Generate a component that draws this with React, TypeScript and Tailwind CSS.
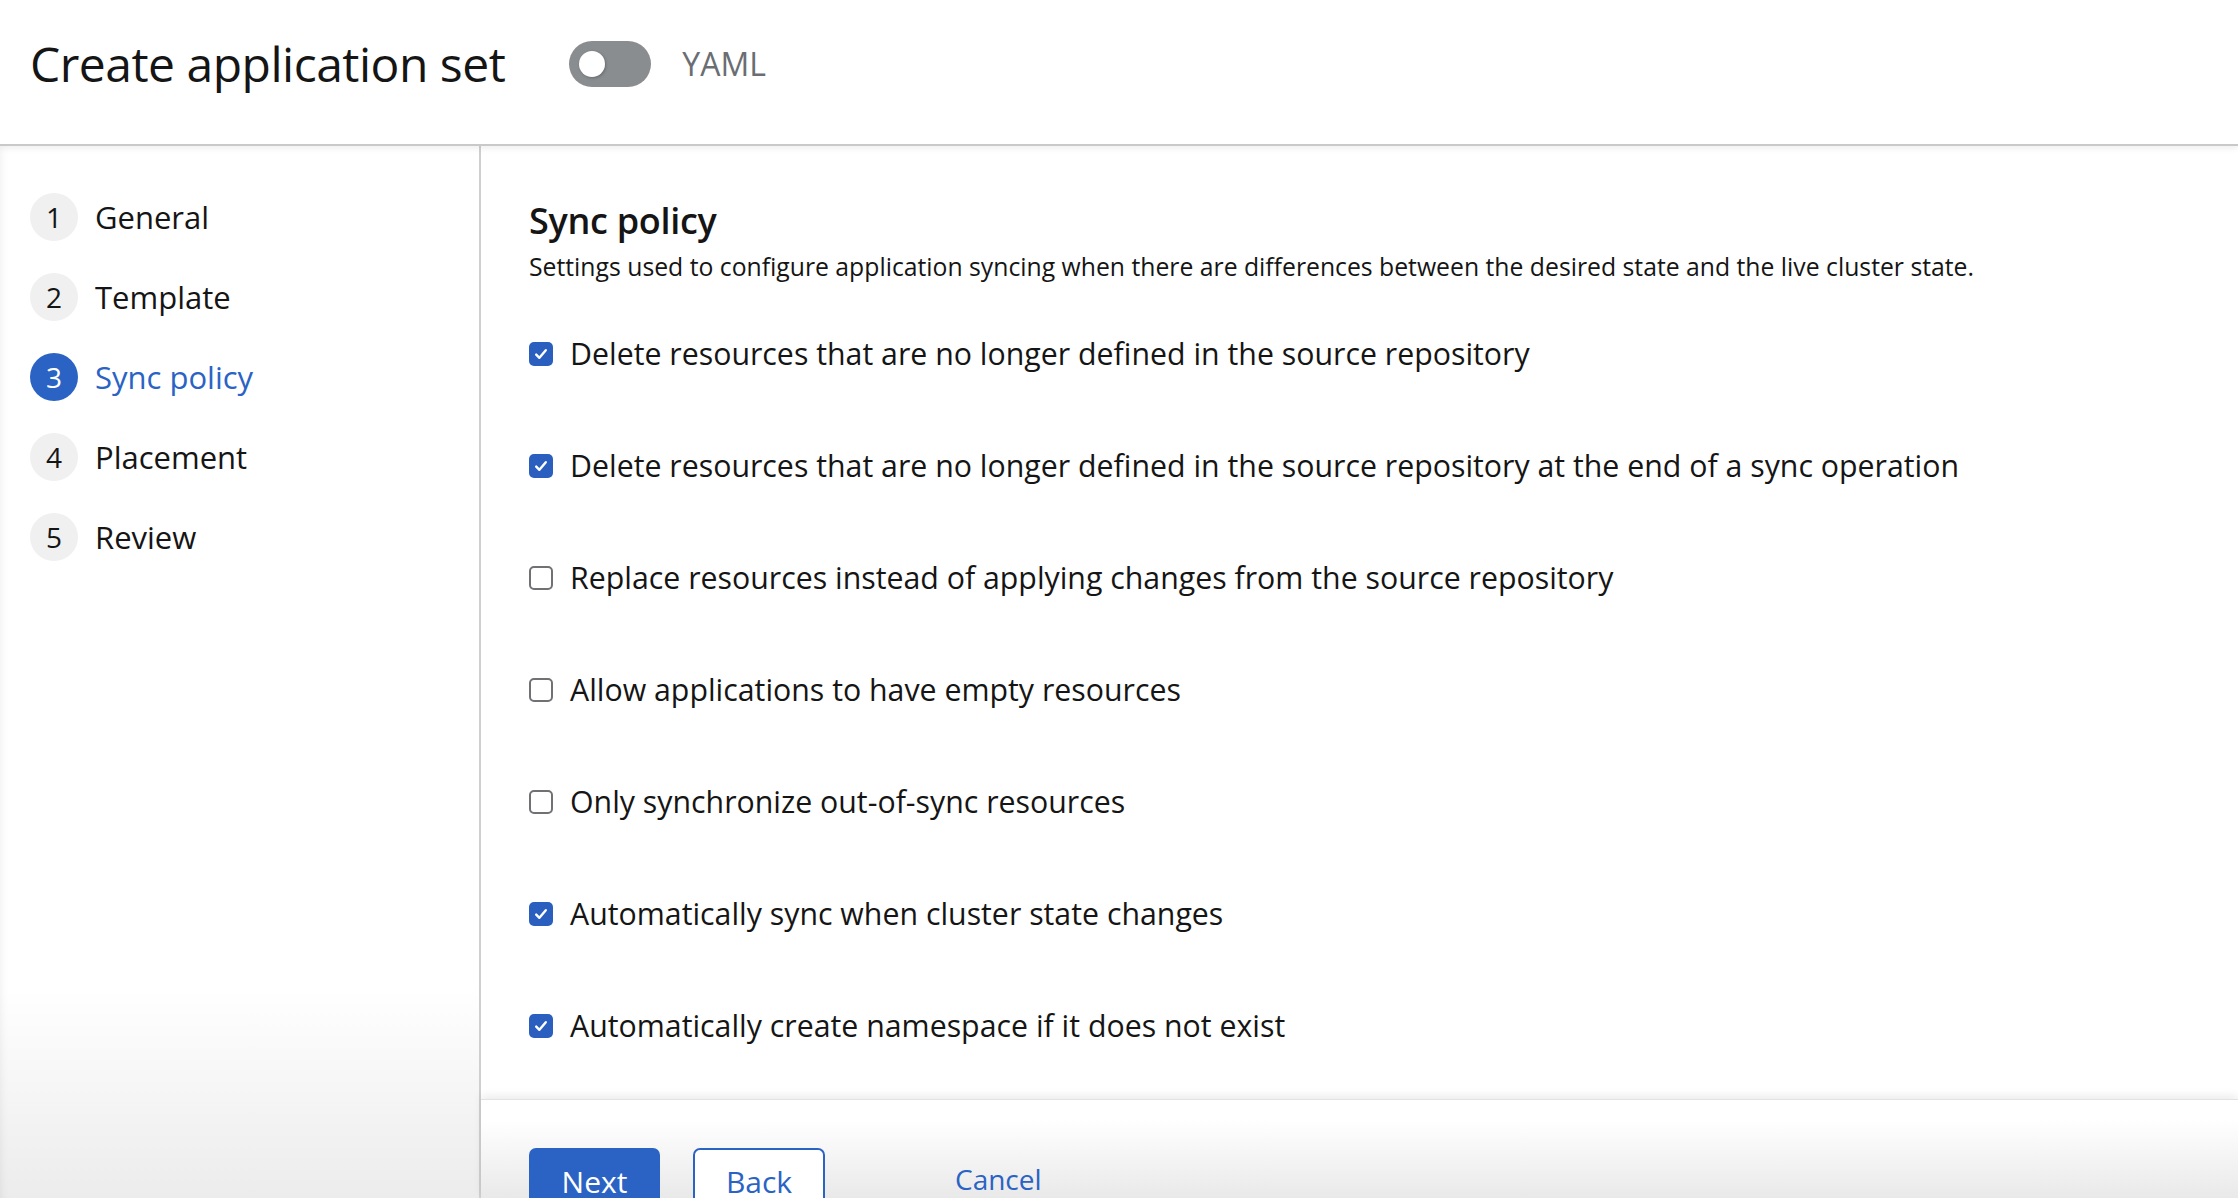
import React from "react";

const FONT = { fontFamily: '"Open Sans", "Liberation Sans", sans-serif' };

const steps = [
  { n: 1, label: "General" },
  { n: 2, label: "Template" },
  { n: 3, label: "Sync policy", active: true },
  { n: 4, label: "Placement" },
  { n: 5, label: "Review" },
];

const options = [
  { label: "Delete resources that are no longer defined in the source repository", checked: true },
  { label: "Delete resources that are no longer defined in the source repository at the end of a sync operation", checked: true },
  { label: "Replace resources instead of applying changes from the source repository", checked: false },
  { label: "Allow applications to have empty resources", checked: false },
  { label: "Only synchronize out-of-sync resources", checked: false },
  { label: "Automatically sync when cluster state changes", checked: true },
  { label: "Automatically create namespace if it does not exist", checked: true },
];

function Checkbox({ checked }: { checked: boolean }) {
  if (checked) {
    return (
      <span className="flex h-[24px] w-[24px] shrink-0 items-center justify-center rounded-[5px] bg-[#2a5fbf]">
        <svg width="16" height="16" viewBox="0 0 16 16" fill="none">
          <path d="M3.2 8.6 L6.4 11.8 L12.8 4.2" stroke="white" strokeWidth="2.4" strokeLinecap="round" strokeLinejoin="round" />
        </svg>
      </span>
    );
  }
  return <span className="block h-[24px] w-[24px] shrink-0 rounded-[5px] border-2 border-[#6f7175] bg-white" />;
}

export default function App() {
  return (
    <div className="flex h-[1198px] w-full flex-col overflow-hidden bg-white text-[#151515]" style={FONT}>
      {/* Header */}
      <header className="relative z-10 flex h-[146px] shrink-0 items-center border-b-2 border-[#c9c9c9] bg-white pb-[16px] pl-[30px] shadow-[0_3px_6px_rgba(0,0,0,0.06)]">
        <h1 className="text-[48px] font-medium tracking-[-0.5px] text-[#151515]">Create application set</h1>
        <div className="ml-[64px] flex items-center">
          <span className="flex h-[46px] w-[82px] items-center rounded-full bg-[#8a8d90] pl-[10px]">
            <span className="block h-[26px] w-[26px] rounded-full bg-white shadow-[1px_1px_3px_rgba(0,0,0,0.25)]" />
          </span>
          <span className="ml-[31px] text-[32px] text-[#6a6e73]">YAML</span>
        </div>
      </header>

      <div className="flex min-h-0 flex-1">
        {/* Sidebar */}
        <nav className="flex w-[481px] shrink-0 flex-col gap-[32px] border-r-2 border-[#cfcfcf] bg-gradient-to-b from-white from-80% to-[#ececec] pl-[30px] pt-[47px] shadow-[inset_8px_0_10px_-8px_rgba(0,0,0,0.08)]">
          {steps.map((s) => (
            <div key={s.n} className="flex h-[48px] items-center">
              <span
                className={
                  s.active
                    ? "flex h-[48px] w-[48px] items-center justify-center rounded-full bg-[#2a63c4] text-[28px] text-white"
                    : "flex h-[48px] w-[48px] items-center justify-center rounded-full bg-[#f0f0f0] text-[28px] text-[#151515]"
                }
              >
                {s.n}
              </span>
              <span className={s.active ? "ml-[17px] text-[31px] text-[#2a63c4]" : "ml-[17px] text-[31px] text-[#151515]"}>
                {s.label}
              </span>
            </div>
          ))}
        </nav>

        {/* Main */}
        <main className="flex min-w-0 flex-1 flex-col">
          <section className="flex-1 pl-[48px] pt-[53px]">
            <h2 className="text-[36px] font-semibold leading-[44px] tracking-[-0.3px]">Sync policy</h2>
            <p className="mt-[8px] text-[24.75px] leading-[32px]">
              Settings used to configure application syncing when there are differences between the desired state and the live cluster state.
            </p>
            <div className="mt-[51px] flex flex-col gap-[72px]">
              {options.map((o, i) => (
                <label key={i} className="flex h-[40px] items-center">
                  <Checkbox checked={o.checked} />
                  <span className="ml-[17px] text-[30.3px] leading-[40px]">{o.label}</span>
                </label>
              ))}
            </div>
          </section>
          <footer className="relative h-[99px] shrink-0 border-t border-[#e2e2e2] bg-gradient-to-b from-white from-20% to-[#e9e9e9] pl-[48px] pt-[48px] shadow-[0_-4px_8px_rgba(0,0,0,0.07)]">
            <div className="flex items-start">
              <button className="h-[68px] w-[131px] rounded-[7px] bg-[#2a63c4] pb-[2px] text-[30px] text-white">Next</button>
              <button className="ml-[33px] h-[68px] w-[132px] rounded-[7px] border-2 border-[#2a63c4] bg-white pb-[2px] text-[30px] text-[#2a63c4]">
                Back
              </button>
              <button className="ml-[97px] h-[62px] px-[33px] text-[28px] text-[#2a63c4]">Cancel</button>
            </div>
          </footer>
        </main>
      </div>
    </div>
  );
}
